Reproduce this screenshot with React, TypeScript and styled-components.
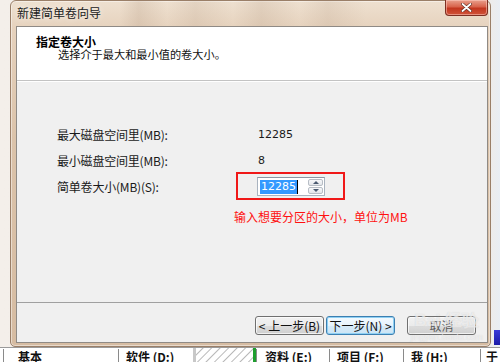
import React from 'react';
import styled, { createGlobalStyle } from 'styled-components';

const GlobalStyle = createGlobalStyle`
  html, body {
    margin: 0;
    padding: 0;
    background: #f3eee9;
  }
  body {
    font-family: "Noto Sans CJK SC", "DejaVu Sans", sans-serif;
    font-size: 12px;
    color: #1a1a1a;
  }
`;

const Screen = styled.div`
  width: 500px;
  height: 362px;
  overflow: hidden;
  position: relative;
  display: flex;
  flex-direction: column;
  background: linear-gradient(90deg, #f4efea 0%, #f1ebe5 97%, #e9eef4 100%);
`;

const Window = styled.div`
  margin-left: 10px;
  width: 481px;
  height: 348px;
  box-sizing: border-box;
  border: 1px solid #9a7f68;
  border-radius: 6px 6px 5px 5px;
  padding: 0 2px 3px 5px;
  display: flex;
  flex-direction: column;
  background: linear-gradient(180deg, #eee0d0 0%, #e6d2bd 8%, #dbc3aa 40%, #d6bca2 100%);
  box-shadow: inset 0 0 0 1px rgba(255, 255, 255, 0.45);
`;

const TitleBar = styled.div`
  height: 25px;
  display: flex;
  justify-content: space-between;
  align-items: flex-start;
  background:
    linear-gradient(90deg, transparent 0%, transparent 22%, rgba(150, 120, 95, 0.16) 26%, transparent 32%,
      rgba(150, 120, 95, 0.12) 38%, transparent 46%, rgba(150, 120, 95, 0.14) 52%, transparent 60%,
      rgba(150, 120, 95, 0.12) 66%, transparent 74%);
`;

const Title = styled.span`
  padding: 4px 0 0 1px;
  font-size: 12px;
  line-height: 16px;
  color: #202020;
  text-shadow: 0 0 6px rgba(255, 255, 255, 0.9);
`;

const CloseButton = styled.div`
  width: 43px;
  height: 16px;
  margin-top: -1px;
  box-sizing: border-box;
  border: 1px solid #7d2f22;
  border-top: none;
  border-radius: 0 0 4px 4px;
  background: linear-gradient(180deg, #e9a08d 0%, #d8634c 45%, #c2361f 55%, #d0543a 100%);
  display: flex;
  align-items: center;
  justify-content: center;
  box-shadow: inset 0 0 0 1px rgba(255, 210, 200, 0.5);
`;

const Client = styled.div`
  flex: 1;
  display: flex;
  flex-direction: column;
  border: 1px solid #8f8a85;
  background: #f0f0f0;
`;

const Header = styled.div`
  height: 54px;
  box-sizing: border-box;
  background: #ffffff;
  border-bottom: 1px solid #c3c3c3;
  padding: 9px 0 0 19px;
`;

const HeaderTitle = styled.div`
  font-weight: bold;
  font-size: 12px;
  line-height: 12px;
  color: #000;
`;

const HeaderSub = styled.div`
  padding-left: 22px;
  font-size: 11.2px;
  line-height: 12px;
  color: #111;
`;

const Body = styled.div`
  flex: 1;
  display: flex;
  flex-direction: column;
  border-top: 1px solid #ffffff;
`;

const Form = styled.div`
  padding: 39px 0 0 40px;
  display: grid;
  grid-template-columns: 200px auto;
  grid-auto-rows: 26px;
  align-items: center;
`;

const Label = styled.span`
  font-size: 12px;
  color: #1a1a1a;
  letter-spacing: -0.2px;
`;

const Value = styled.span`
  font-family: "DejaVu Sans", sans-serif;
  font-size: 11px;
  color: #1a1a1a;
  padding-left: 1px;
`;

const SpinWrap = styled.div`
  position: relative;
  display: inline-flex;
  width: 68px;
  height: 19px;
  box-sizing: border-box;
  border: 1px solid #a9b3bf;
  border-top-color: #8c96a2;
  background: #fff;
`;

const Highlight = styled.div`
  position: absolute;
  left: -22px;
  top: -6px;
  width: 109px;
  height: 28px;
  box-sizing: border-box;
  border: 2px solid #f01818;
  pointer-events: none;
`;

const SpinInput = styled.div`
  flex: 1;
  display: flex;
  align-items: center;
  padding-left: 2px;
`;

const Selected = styled.span`
  background: #3399ff;
  color: #ffffff;
  font-family: "DejaVu Sans", sans-serif;
  font-size: 11px;
  line-height: 14px;
  padding: 0 1px;
`;

const Caret = styled.span`
  width: 1px;
  height: 14px;
  background: #000;
`;

const SpinButtons = styled.div`
  width: 15px;
  display: flex;
  flex-direction: column;
  gap: 1px;
  padding: 1px;
`;

const SpinBtn = styled.div`
  flex: 1;
  border: 1px solid #b7bdc5;
  border-radius: 2px;
  background: linear-gradient(180deg, #f7f8fa 0%, #e3e6ea 100%);
  display: flex;
  align-items: center;
  justify-content: center;
`;

const Note = styled.div`
  padding: 11px 0 0 217px;
  font-size: 12px;
  line-height: 14px;
  color: #ff1010;
`;

const Spacer = styled.div`
  flex: 1;
`;

const Footer = styled.div`
  height: 40px;
  box-sizing: border-box;
  border-top: 1px solid #a0a0a0;
  display: flex;
  justify-content: flex-end;
  align-items: flex-start;
  padding: 13px 11px 0 0;
  position: relative;
`;

const Button = styled.div<{ $focus?: boolean; $gapLeft?: number; $muted?: boolean }>`
  width: 69px;
  height: 19px;
  margin-left: ${p => p.$gapLeft ?? 0}px;
  box-sizing: border-box;
  border: 1px solid ${p => (p.$focus ? '#3c7fb1' : '#707070')};
  border-radius: 3px;
  background: ${p =>
    p.$focus
      ? 'linear-gradient(180deg, #f4fafe 0%, #e6f3fc 50%, #d7ebf8 51%, #cbe4f5 100%)'
      : 'linear-gradient(180deg, #f2f2f2 0%, #ebebeb 50%, #dddddd 51%, #cfcfcf 100%)'};
  box-shadow: inset 0 0 0 1px ${p => (p.$focus ? '#8fd0f3' : 'rgba(255,255,255,0.7)')};
  display: flex;
  align-items: center;
  justify-content: center;
  font-size: 12px;
  color: ${p => (p.$muted ? '#5a5a5a' : '#111')};
  white-space: nowrap;
`;

const Watermark = styled.div`
  position: absolute;
  right: 4px;
  top: 9px;
  display: flex;
  flex-direction: column;
  align-items: center;
  color: rgba(255, 255, 255, 0.6);
  pointer-events: none;
  text-shadow: 0 0 1px rgba(160, 160, 160, 0.45);
`;

const WmLogo = styled.span`
  font-family: "Liberation Sans", sans-serif;
  font-weight: bold;
  font-size: 17px;
  line-height: 18px;
`;

const WmUrl = styled.span`
  font-family: "Liberation Sans", sans-serif;
  font-size: 9px;
  line-height: 10px;
  margin-top: 2px;
`;

const Strip = styled.div`
  height: 14px;
  display: flex;
  background: #ffffff;
  border-top: 1px solid #9a9a9a;
`;

const Cell = styled.div<{ $w: number; $pad?: number; $first?: boolean }>`
  width: ${p => p.$w}px;
  flex-shrink: 0;
  box-sizing: border-box;
  border-left: ${p => (p.$first ? 'none' : '1px solid #8a8a8a')};
  padding-left: ${p => p.$pad ?? 7}px;
  font-size: 12px;
  font-weight: bold;
  line-height: 16px;
  margin-top: 1px;
  color: #111;
  overflow: hidden;
  white-space: nowrap;
`;

const Hatch = styled.div`
  width: 57px;
  flex-shrink: 0;
  border-left: 3px solid #c8c8c8;
  background: repeating-linear-gradient(135deg, #ffffff 0px, #ffffff 4px, #b9b9b9 5px, #ffffff 6px);
`;

const GreenBar = styled.div`
  width: 3px;
  flex-shrink: 0;
  background: #1e9e2e;
`;

const SideBlue = styled.div`
  position: absolute;
  right: 0;
  top: 330px;
  width: 6px;
  height: 15px;
  background: linear-gradient(180deg, #3a3ad8, #1a1aa8);
`;

const Arrow = ({ up }: { up?: boolean }) => (
  <svg width="6" height="3" viewBox="0 0 6 3">
    <path d={up ? 'M0 3 L3 0 L6 3 Z' : 'M0 0 L3 3 L6 0 Z'} fill="#4a5a70" />
  </svg>
);

const App: React.FC = () => {
  return (
    <Screen>
      <GlobalStyle />
      <Window>
        <TitleBar>
          <Title>新建简单卷向导</Title>
          <CloseButton>
            <svg width="11" height="9" viewBox="0 0 11 9">
              <path d="M1.5 1 L9.5 8 M9.5 1 L1.5 8" stroke="#5a2a20" strokeWidth="3" strokeLinecap="round" />
              <path d="M1.5 1 L9.5 8 M9.5 1 L1.5 8" stroke="#ffffff" strokeWidth="1.8" strokeLinecap="round" />
            </svg>
          </CloseButton>
        </TitleBar>
        <Client>
          <Header>
            <HeaderTitle>指定卷大小</HeaderTitle>
            <HeaderSub>选择介于最大和最小值的卷大小。</HeaderSub>
          </Header>
          <Body>
            <Form>
              <Label>最大磁盘空间里(MB):</Label>
              <Value>12285</Value>
              <Label>最小磁盘空间里(MB):</Label>
              <Value>8</Value>
              <Label>简单卷大小(MB)(S):</Label>
              <div>
                <SpinWrap>
                  <Highlight />
                  <SpinInput>
                    <Selected>12285</Selected>
                    <Caret />
                  </SpinInput>
                  <SpinButtons>
                    <SpinBtn><Arrow up /></SpinBtn>
                    <SpinBtn><Arrow /></SpinBtn>
                  </SpinButtons>
                </SpinWrap>
              </div>
            </Form>
            <Note>输入想要分区的大小，单位为MB</Note>
            <Spacer />
            <Footer>
              <Button>&lt; 上一步(B)</Button>
              <Button $focus $gapLeft={2}>下一步(N) &gt;</Button>
              <Button $gapLeft={12} $muted>取消</Button>
              <Watermark>
                <WmLogo>Bai 经验</WmLogo>
                <WmUrl>jingyan.baidu.com</WmUrl>
              </Watermark>
            </Footer>
          </Body>
        </Client>
      </Window>
      <Strip>
        <Cell $w={3} $pad={0} $first />
        <Cell $w={115} $pad={14}>基本</Cell>
        <Cell $w={75}>软件 (D:)</Cell>
        <Hatch />
        <GreenBar />
        <Cell $w={73} $pad={8}>资料 (E:)</Cell>
        <Cell $w={74}>项目 (F:)</Cell>
        <Cell $w={77}>我 (H:)</Cell>
        <Cell $w={20} $pad={5}>于</Cell>
      </Strip>
      <SideBlue />
    </Screen>
  );
};

export default App;
